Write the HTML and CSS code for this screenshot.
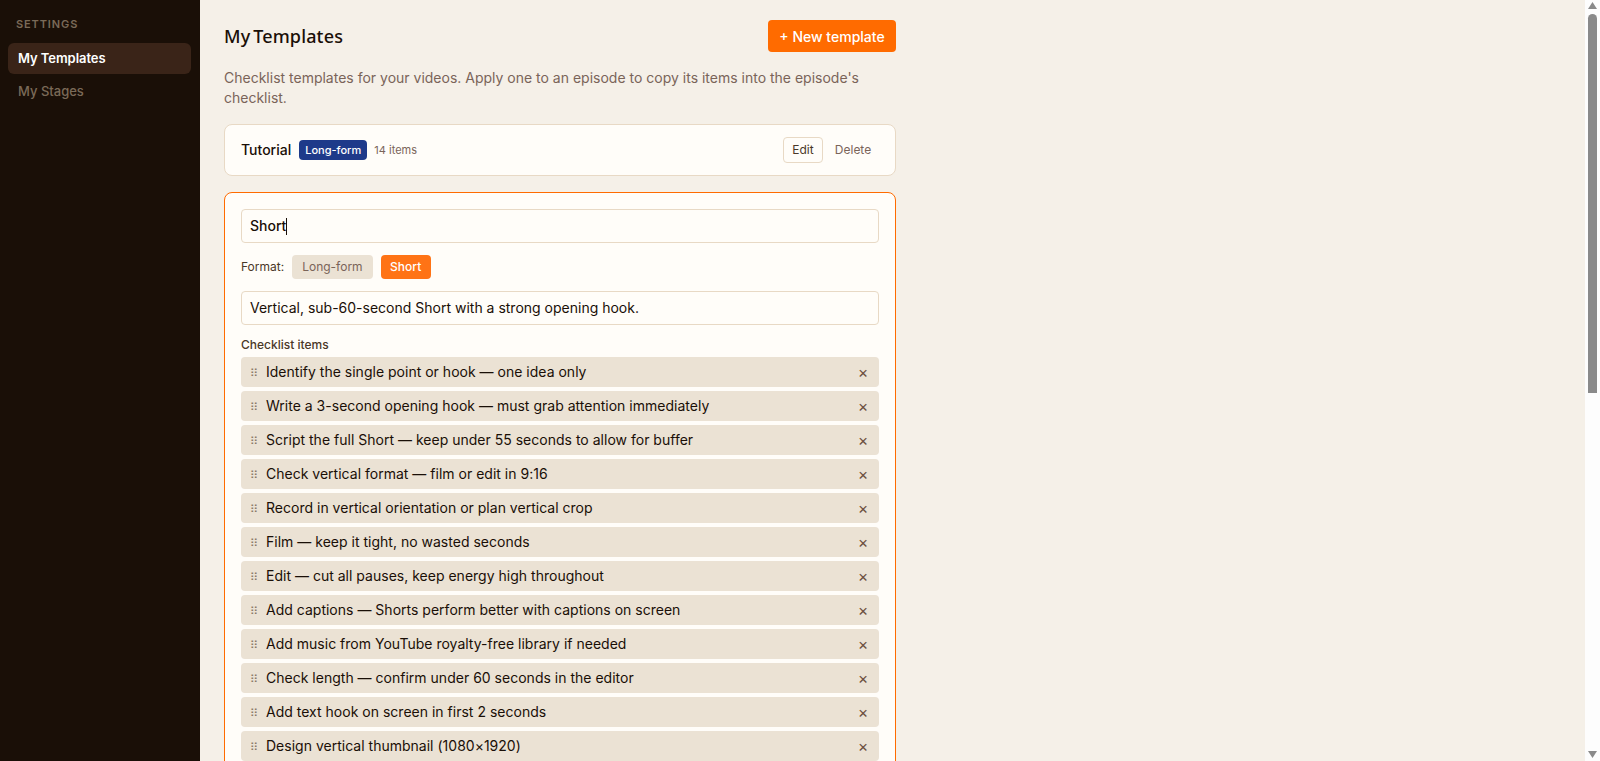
FILE: index.html
```html
<!DOCTYPE html>
<html lang="en">
<head>
<meta charset="utf-8">
<title>My Templates</title>
<link rel="stylesheet" href="styles.css">
</head>
<body>
<div class="app">
  <aside class="sidebar">
    <div class="side-label">Settings</div>
    <a class="nav-item active">My Templates</a>
    <a class="nav-item">My Stages</a>
  </aside>
  <main class="main">
    <div class="content">
      <header class="head">
        <h1 class="title">My Templates</h1>
        <button class="btn-new">+ New template</button>
      </header>
      <p class="desc">Checklist templates for your videos. Apply one to an episode to copy its items into the episode's checklist.</p>
      <section class="card row-card">
        <span class="tpl-name">Tutorial</span>
        <span class="badge">Long-form</span>
        <span class="count">14 items</span>
        <span class="spacer"></span>
        <button class="btn-edit">Edit</button>
        <button class="btn-delete">Delete</button>
      </section>
      <section class="card editor">
        <div class="field name-field"><span>Short</span><i class="caret"></i></div>
        <div class="format">
          <span class="format-label">Format:</span>
          <button class="fmt">Long-form</button>
          <button class="fmt on">Short</button>
        </div>
        <div class="field">Vertical, sub-60-second Short with a strong opening hook.</div>
        <div class="items-label">Checklist items</div>
        <ul class="items">
          <li class="item"><span class="grip">⠿</span><span class="item-text">Identify the single point or hook — one idea only</span><span class="x">×</span></li>
          <li class="item"><span class="grip">⠿</span><span class="item-text">Write a 3-second opening hook — must grab attention immediately</span><span class="x">×</span></li>
          <li class="item"><span class="grip">⠿</span><span class="item-text">Script the full Short — keep under 55 seconds to allow for buffer</span><span class="x">×</span></li>
          <li class="item"><span class="grip">⠿</span><span class="item-text">Check vertical format — film or edit in 9:16</span><span class="x">×</span></li>
          <li class="item"><span class="grip">⠿</span><span class="item-text">Record in vertical orientation or plan vertical crop</span><span class="x">×</span></li>
          <li class="item"><span class="grip">⠿</span><span class="item-text">Film — keep it tight, no wasted seconds</span><span class="x">×</span></li>
          <li class="item"><span class="grip">⠿</span><span class="item-text">Edit — cut all pauses, keep energy high throughout</span><span class="x">×</span></li>
          <li class="item"><span class="grip">⠿</span><span class="item-text">Add captions — Shorts perform better with captions on screen</span><span class="x">×</span></li>
          <li class="item"><span class="grip">⠿</span><span class="item-text">Add music from YouTube royalty-free library if needed</span><span class="x">×</span></li>
          <li class="item"><span class="grip">⠿</span><span class="item-text">Check length — confirm under 60 seconds in the editor</span><span class="x">×</span></li>
          <li class="item"><span class="grip">⠿</span><span class="item-text">Add text hook on screen in first 2 seconds</span><span class="x">×</span></li>
          <li class="item"><span class="grip">⠿</span><span class="item-text">Design vertical thumbnail (1080×1920)</span><span class="x">×</span></li>
        </ul>
      </section>
    </div>
  </main>
  <div class="scrollbar">
    <svg class="arrow" width="15" height="14" viewBox="0 0 15 14"><path d="M7.5 2 L12 9 H3 Z" fill="#8a8a8a"/></svg>
    <div class="track"><div class="thumb"></div></div>
    <svg class="arrow" width="15" height="14" viewBox="0 0 15 14"><path d="M3 4 H12 L7.5 11 Z" fill="#8a8a8a"/></svg>
  </div>
</div>
</body>
</html>
```

FILE: styles.css
```css
* { box-sizing: border-box; }
html, body { margin: 0; height: 100%; overflow: hidden; }
body { font-family: Inter, "Liberation Sans", sans-serif; font-size: 14px; color: #1a0f07; background: #f5f0e8; }
button { font-family: inherit; cursor: pointer; }
.app { display: flex; height: 100vh; }
.sidebar { width: 200px; flex: none; background: #1a0f07; padding: 18px 9px 0 8px; }
.side-label { font-size: 11px; line-height: 13px; font-weight: 600; letter-spacing: 0.08em; text-transform: uppercase; color: #7a6a58; padding: 0 8px; margin-bottom: 12px; }
.nav-item { display: block; height: 31px; line-height: 30px; padding: 0 10px; margin-bottom: 2px; border-radius: 6px; font-size: 13px; font-weight: 500; color: #7a6a58; }
.nav-item.active { background: #3a2418; color: #fff; font-weight: 600; letter-spacing: -0.005em; }
.main { flex: 1; min-width: 0; overflow: hidden; }
.content { width: 720px; padding: 20px 24px 0; }
.head { display: flex; justify-content: space-between; align-items: center; height: 32px; margin-bottom: 16px; }
.title { margin: 0; font-family: "Noto Sans", Inter, sans-serif; font-size: 18px; font-weight: 500; word-spacing: -2px; letter-spacing: 0.15px; color: #1a0f07; }
.btn-new { height: 32px; width: 128px; padding: 0; border: 0; border-radius: 4px; background: #ff6b00; color: #fff; font-size: 14px; font-weight: 500; }
.desc { margin: 0 0 16px; font-size: 14px; line-height: 20px; color: #7a6459; }
.card { background: #fffdf9; border: 1px solid #e8d9c5; border-radius: 8px; margin-bottom: 16px; }
.row-card { display: flex; align-items: center; height: 52px; padding: 0 16px 2px; }
.tpl-name { font-size: 14px; font-weight: 500; color: #1a0f07; margin-right: 8px; }
.badge { height: 20px; line-height: 20px; padding: 0 6px; border-radius: 4px; background: #1e3a8a; color: #fff; font-size: 11px; font-weight: 500; margin-right: 7px; margin-top: 2px; }
.count { font-size: 11px; color: #7a6459; margin-top: 2px; }
.spacer { flex: 1; }
.btn-edit { width: 40px; height: 26px; padding: 0 0 2px; margin-top: 2px; background: transparent; border: 1px solid #e8d9c5; border-radius: 4px; font-size: 12px; color: #4a3828; }
.btn-delete { width: 52px; height: 26px; padding: 0 0 2px; margin: 2px 0 0 4px; background: transparent; border: 0; font-size: 12px; color: #7a6459; }
.editor { border-color: #ff6b00; padding: 16px; }
.field { height: 34px; line-height: 32px; padding: 0 8px; background: #fffdf9; border: 1px solid #e8d9c5; border-radius: 4px; font-size: 14px; color: #1a0f07; }
.name-field { display: flex; align-items: center; font-weight: 500; }
.caret { display: block; width: 1px; height: 17px; background: #1a0f07; }
.format { display: flex; align-items: center; margin: 12px 0; height: 24px; }
.format-label { font-size: 12px; line-height: 14px; padding-bottom: 1px; color: #4a3828; margin-right: 8px; }
.fmt { height: 24px; padding: 0 10px 2px; margin-right: 8px; border: 0; border-radius: 4px; background: #ebe2d4; color: #7a6459; font-size: 12px; }
.fmt.on { background: #ff7315; color: #fff; font-weight: 500; padding: 0 9.5px 2px; }
.items-label { margin-top: 12px; height: 20px; line-height: 16px; font-size: 12px; font-weight: 500; color: #4a3828; }
.items { list-style: none; margin: 0; padding: 0; display: flex; flex-direction: column; gap: 4px; }
.item { display: flex; align-items: center; height: 30px; padding: 0 9px 0 9px; background: #ebe2d4; border-radius: 4px; font-size: 14px; }
.grip { width: 16px; flex: none; font-size: 11px; padding-top: 2px; color: #8a7a68; font-family: "DejaVu Sans", sans-serif; }
.item-text { flex: 1; color: #1a0f07; padding-bottom: 2px; letter-spacing: 0.01px; }
.x { width: 14px; text-align: center; font-size: 16px; color: #6b5040; }
.scrollbar { width: 15px; flex: none; background: #fdfdfd; display: flex; flex-direction: column; }
.arrow { display: block; flex: none; }
.track { flex: 1; padding: 0 3px; }
.thumb { height: 379px; border-radius: 5px 5px 0 0; background: #8a8a8a; }
```
